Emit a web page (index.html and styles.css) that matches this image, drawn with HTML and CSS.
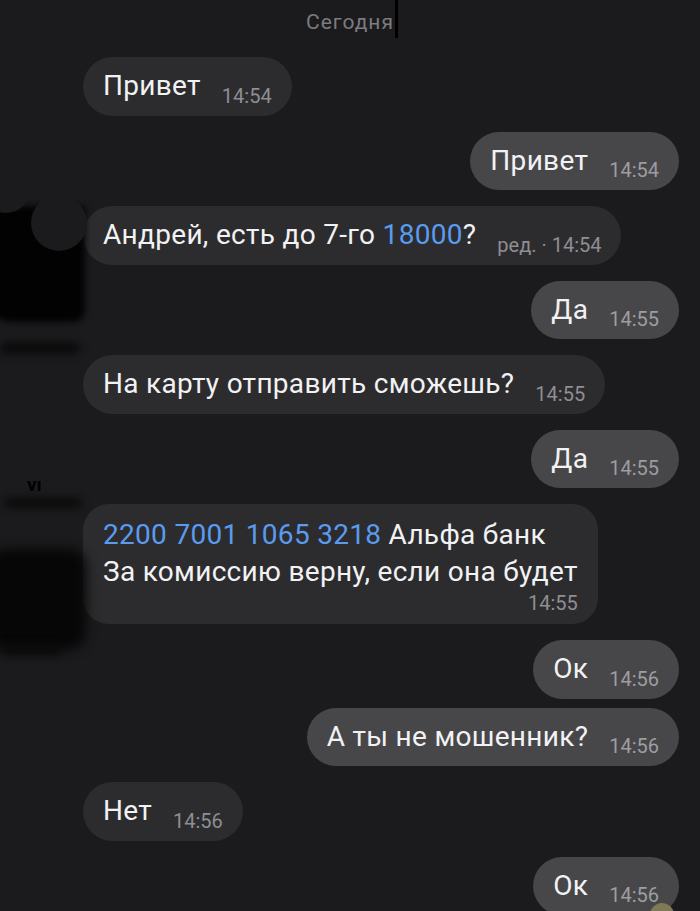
FILE: index.html
```html
<!DOCTYPE html>
<html lang="ru">
<head>
    <meta charset="UTF-8">
    <meta name="viewport" content="width=device-width, initial-scale=1.0">
    <title>Чат</title>
    <link rel="stylesheet" href="styles.css">
</head>
<body>
    <div class="screen">
        <!-- Day separator -->
        <div class="day">Сегодня</div>
        <div class="caret"></div>

        <!-- Messages -->
        <div class="messages">
            <div class="msg in">
                <div class="bubble"><span class="text">Привет</span><span class="time">14:54</span></div>
            </div>
            <div class="msg out">
                <div class="bubble"><span class="text">Привет</span><span class="time">14:54</span></div>
            </div>
            <div class="msg in">
                <div class="bubble"><span class="text">Андрей, есть до 7-го <span class="link">18000</span>?</span><span class="time">ред. · 14:54</span></div>
            </div>
            <div class="msg out">
                <div class="bubble"><span class="text">Да</span><span class="time">14:55</span></div>
            </div>
            <div class="msg in">
                <div class="bubble"><span class="text">На карту отправить сможешь?</span><span class="time">14:55</span></div>
            </div>
            <div class="msg out">
                <div class="bubble"><span class="text">Да</span><span class="time">14:55</span></div>
            </div>
            <div class="msg in">
                <div class="bubble multi">
                    <span class="text"><span class="link">2200 7001 1065 3218</span> Альфа банк<br>За комиссию верну, если она будет</span>
                    <span class="time">14:55</span>
                </div>
            </div>
            <div class="msg out">
                <div class="bubble"><span class="text">Ок</span><span class="time">14:56</span></div>
            </div>
            <div class="msg out close">
                <div class="bubble"><span class="text">А ты не мошенник?</span><span class="time">14:56</span></div>
            </div>
            <div class="msg in">
                <div class="bubble"><span class="text">Нет</span><span class="time">14:56</span></div>
            </div>
            <div class="msg out">
                <div class="bubble"><span class="text">Ок</span><span class="time">14:56</span></div>
            </div>
        </div>

        <!-- Blurred-out avatars -->
        <div class="censor">
            <div class="blot blot-a"></div>
            <div class="blot-cut cut-1"></div>
            <div class="blot-cut cut-2"></div>
            <div class="blot smear smear-1"></div>
            <div class="mark">vı</div>
            <div class="blot smear smear-2"></div>
            <div class="blot blot-b"></div>
            <div class="blot smear smear-3"></div>
        </div>
        <div class="reaction"></div>
    </div>
</body>
</html>
```

FILE: styles.css
```css
body {
    margin: 0;
    padding: 0;
    background-color: #1b1b1d;
    font-family: Roboto, "Noto Sans", sans-serif;
    color: #f2f2f4;
}

.screen {
    position: relative;
    width: 700px;
    height: 911px;
    overflow: hidden;
}

/* Day separator */
.day {
    text-align: center;
    font-size: 21px;
    line-height: 24px;
    letter-spacing: 1px;
    padding-top: 10px;
    color: #7c7c80;
}

.caret {
    position: absolute;
    left: 395px;
    top: 0;
    width: 3px;
    height: 38px;
    background-color: #000;
}

/* Messages */
.messages {
    display: flex;
    flex-direction: column;
    gap: 16px;
    padding-top: 23px;
}

.msg {
    display: flex;
}

.msg.in {
    justify-content: flex-start;
    padding-left: 83px;
}

.msg.out {
    justify-content: flex-end;
    padding-right: 21px;
}

.msg.close {
    margin-top: -7px;
}

.bubble {
    display: flex;
    align-items: flex-end;
    gap: 21px;
    padding: 12px 20px 12px 20px;
    border-radius: 30px;
    background-color: #2c2c2e;
}

.out .bubble {
    background-color: #474749;
}

.text {
    font-size: 28px;
    line-height: 34.5px;
    letter-spacing: 0.3px;
    white-space: nowrap;
}

.time {
    font-size: 20px;
    line-height: 20px;
    margin-bottom: -2px;
    color: #8e8e93;
    white-space: nowrap;
}

.out .time {
    color: #9d9da2;
}

.link {
    color: #5a9bf0;
}

.bubble.multi {
    flex-direction: column;
    gap: 3px;
    border-radius: 26px;
    padding-bottom: 11px;
}

.bubble.multi .text {
    line-height: 37px;
}

.bubble.multi .time {
    align-self: flex-end;
    margin-bottom: 0;
}

/* Blurred-out avatars on the left edge */
.censor {
    position: absolute;
    left: 0;
    top: 0;
    width: 90px;
    height: 911px;
}

.blot {
    position: absolute;
    background-color: #020202;
    filter: blur(3px);
}

.blot-a {
    left: -10px;
    top: 206px;
    width: 95px;
    height: 116px;
    border-radius: 0 0 12px 20px;
}

.blot-cut {
    position: absolute;
    border-radius: 50%;
    background-color: #1b1b1d;
}

.cut-1 {
    left: -18px;
    top: 165px;
    width: 48px;
    height: 48px;
}

.cut-2 {
    left: 31px;
    top: 195px;
    width: 56px;
    height: 56px;
}

.smear {
    background-color: #0a0a0b;
    border-radius: 6px;
    filter: blur(4px);
}

.smear-1 {
    left: 0;
    top: 342px;
    width: 80px;
    height: 12px;
}

.smear-2 {
    left: 4px;
    top: 498px;
    width: 78px;
    height: 10px;
}

.smear-3 {
    left: 0;
    top: 645px;
    width: 62px;
    height: 10px;
}

.blot-b {
    left: -10px;
    top: 549px;
    width: 96px;
    height: 100px;
    border-radius: 16px;
    background-color: #060607;
    filter: blur(6px);
}

.mark {
    position: absolute;
    left: 27px;
    top: 473px;
    font-size: 19px;
    font-weight: 700;
    color: #000;
}

.reaction {
    position: absolute;
    left: 650px;
    top: 903px;
    width: 24px;
    height: 24px;
    border-radius: 50%;
    background-color: #7d7a55;
}
```
